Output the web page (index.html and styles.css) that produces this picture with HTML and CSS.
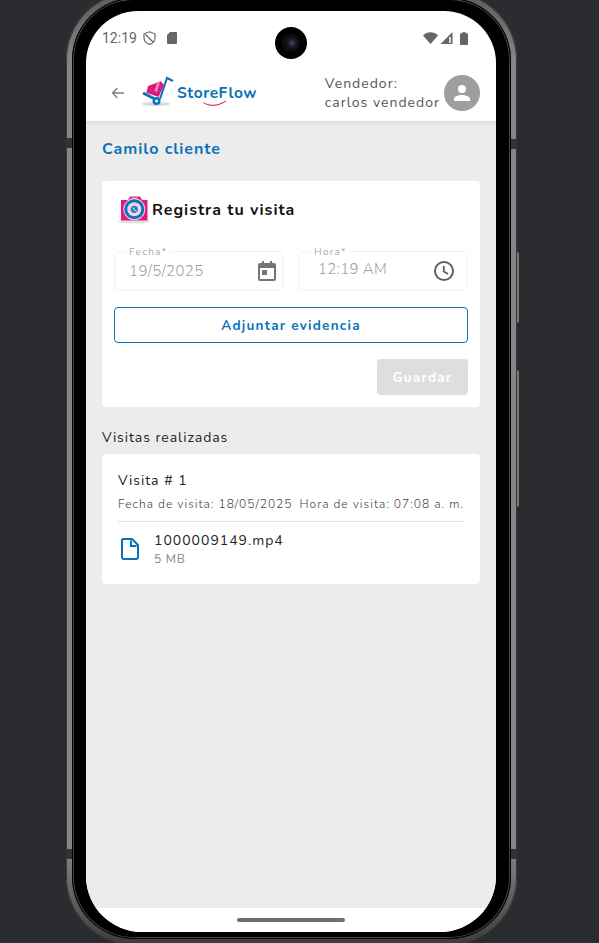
FILE: index.html
```html
<!DOCTYPE html>
<html lang="es">
<head>
  <meta charset="UTF-8">
  <meta name="viewport" content="width=device-width, initial-scale=1.0">
  <title>StoreFlow - Registra tu visita</title>
  <link rel="stylesheet" href="styles.css">
</head>
<body>
  <div class="device">
    <span class="band band-lt"></span>
    <span class="band band-rt"></span>
    <span class="band band-lb"></span>
    <span class="band band-rb"></span>
    <span class="side-btn side-btn-power"></span>
    <span class="side-btn side-btn-volume"></span>
    <div class="screen">
      <div class="camera"><span class="lens"></span></div>

      <div class="status-bar">
        <div class="status-left">
          <span class="time">12:19</span>
          <svg class="st-icon" width="13" height="14" viewBox="0 0 13 14"><path d="M6.500 0.800 L12 2.800 V7 C12 10.200 9.800 12.400 6.500 13.400 C3.200 12.400 1 10.200 1 7 V2.800 Z M2.500 3.500 L10.500 11.500" fill="none" stroke="#666" stroke-width="1.200"/></svg>
          <svg class="st-icon st-sd" width="10" height="12" viewBox="0 0 10 12"><path d="M3 0 H9 A1 1 0 0 1 10 1 V11 A1 1 0 0 1 9 12 H1 A1 1 0 0 1 0 11 V3 Z" fill="#666"/></svg>
        </div>
        <div class="status-right">
          <svg width="15" height="12" viewBox="0 0 15 12"><path d="M0 3.500 C4 -0.800 11 -0.800 15 3.500 L7.500 12 Z" fill="#666"/></svg>
          <svg width="13" height="12" viewBox="0 0 13 12"><path d="M12.500 0 V12 H0.500 Z" fill="#666"/><path d="M9 5 H11 V11 H9 Z" fill="#ddd"/></svg>
          <svg class="st-batt" width="8" height="13" viewBox="0 0 8 13"><path d="M2.500 0 H5.500 V1.200 H7 A1 1 0 0 1 8 2.200 V12 A1 1 0 0 1 7 13 H1 A1 1 0 0 1 0 12 V2.200 A1 1 0 0 1 1 1.200 H2.500 Z" fill="#666"/></svg>
        </div>
      </div>

      <header class="app-header">
        <svg class="back" width="14" height="12" viewBox="0 0 14 12"><path d="M13 6 H2 M6.500 1 L1.500 6 L6.500 11" fill="none" stroke="#808080" stroke-width="1.400"/></svg>
        <div class="logo">
          <svg class="logo-mark" width="42" height="38" viewBox="0 0 42 38">
            <ellipse cx="18" cy="32" rx="14" ry="2" fill="#d9d9d9"/>
            <path d="M10 14 L22.700 9.300 L26 12.700 L20.700 25 L8.300 20.700 Z" fill="#e0197d"/>
            <path d="M19 11 L22 10 L19 20 L16.500 19 Z" fill="#f28cbc"/>
            <path d="M5 21 L21 29" fill="none" stroke="#0a72b8" stroke-width="3"/>
            <path d="M22 27 L29 6 L35 9" fill="none" stroke="#0a72b8" stroke-width="2"/>
            <circle cx="18.500" cy="29" r="4" fill="#0a72b8"/>
            <circle cx="18.500" cy="29" r="1.500" fill="#fff"/>
          </svg>
          <div class="logo-text">
            <span class="logo-name">StoreFlow</span>
            <svg class="swoosh" width="24" height="7" viewBox="0 0 24 7"><path d="M0.500 2.500 C5 6 14 7 23 1" fill="none" stroke="#b5175f" stroke-width="1"/></svg>
          </div>
        </div>
        <div class="seller">
          <div class="seller-text">Vendedor:<br>carlos vendedor</div>
          <div class="avatar">
            <svg width="24" height="24" viewBox="0 0 24 24"><path d="M12 4 A4 4 0 1 1 12 12 A4 4 0 1 1 12 4 Z M12 14 C15 14 20 15.300 20 18 V20 H4 V18 C4 15.300 9 14 12 14 Z" fill="#fff"/></svg>
          </div>
        </div>
      </header>

      <main class="content">
        <h2 class="client">Camilo cliente</h2>

        <section class="card form-card">
          <div class="form-title">
            <svg width="36" height="34" viewBox="0 0 36 34">
              <ellipse cx="18" cy="29.500" rx="16" ry="2" fill="#e4e4e4"/>
              <path d="M5 8 H12 L14 4.500 H24 L26 8 H31.500 V28.500 H5 Z" fill="#e0197d"/>
              <rect x="15.500" y="5.500" width="6" height="1.200" fill="#f7b6d4"/>
              <circle cx="18.300" cy="17.300" r="11" fill="#f7c6dc"/>
              <circle cx="18.300" cy="17.300" r="10" fill="#0a72b8"/>
              <circle cx="18.300" cy="17.300" r="7" fill="#f2d5e6"/>
              <circle cx="18.300" cy="17.300" r="3.600" fill="#2a7fc0"/>
              <path d="M17 15.500 L18.500 18 L20.500 19" fill="none" stroke="#dbeaf6" stroke-width="1"/>
            </svg>
            <h3>Registra tu visita</h3>
          </div>

          <div class="field-row">
            <div class="field">
              <span class="field-label">Fecha*</span>
              <span class="field-value">19/5/2025</span>
              <svg class="field-icon" width="24" height="24" viewBox="0 0 24 24"><path d="M7 2 H9 V4 H15 V2 H17 V4 H19 A2 2 0 0 1 21 6 V20 A2 2 0 0 1 19 22 H5 A2 2 0 0 1 3 20 V6 A2 2 0 0 1 5 4 H7 Z M5 9 V20 H19 V9 Z M7 11 H12 V16 H7 Z" fill="#757575" fill-rule="evenodd"/></svg>
            </div>
            <div class="field field-time">
              <span class="field-label">Hora*</span>
              <span class="field-value">12:19 AM</span>
              <svg class="field-icon" width="24" height="24" viewBox="0 0 24 24"><circle cx="12" cy="12" r="9" fill="none" stroke="#5f5f5f" stroke-width="2"/><path d="M11.800 7 V12.500 L16 15" fill="none" stroke="#5f5f5f" stroke-width="1.800"/></svg>
            </div>
          </div>

          <button class="btn-outline" type="button">Adjuntar evidencia</button>
          <div class="form-actions">
            <button class="btn-save" type="button" disabled>Guardar</button>
          </div>
        </section>

        <h4 class="visits-title">Visitas realizadas</h4>

        <section class="card visit-card">
          <div class="visit-name">Visita # 1</div>
          <div class="visit-meta">
            <span>Fecha de visita: 18/05/2025</span>
            <span>Hora de visita: 07:08 a. m.</span>
          </div>
          <div class="file-row">
            <svg width="24" height="24" viewBox="0 0 24 24"><path d="M5 2 H14 L20 8 V20 A2 2 0 0 1 18 22 H6 A2 2 0 0 1 4 20 V3 A1 1 0 0 1 5 2 Z M13 3.500 V9 H18.500" fill="none" stroke="#0a72b8" stroke-width="2"/></svg>
            <div>
              <div class="file-name">1000009149.mp4</div>
              <div class="file-size">5 MB</div>
            </div>
          </div>
        </section>
      </main>

      <div class="nav-bar"><span class="home-pill"></span></div>
    </div>
  </div>
</body>
</html>
```

FILE: styles.css
```css
html, body {
  height: 100%;
}
body {
  margin: 0;
  background: #2b2c30;
  font-family: "Nunito", "Lato", "Open Sans", sans-serif;
  overflow: hidden;
}
h2, h3, h4 {
  margin: 0;
}

/* phone */
.device {
  position: relative;
  box-sizing: border-box;
  width: 451px;
  height: 953px;
  margin: -8px 0 0 66px;
  padding: 19px 21px 13px 20px;
  background: linear-gradient(180deg, #5a5a5a 0, #858585 7%, #858585 90%, #3c3c3c 100%);
  border-radius: 68px;
  box-shadow: inset 0 0 0 1px #3a3a3a;
}
.device::before {
  content: "";
  position: absolute;
  top: 6px;
  right: 6px;
  bottom: 6px;
  left: 6px;
  background: #000;
  border-radius: 62px;
  box-shadow: inset 0 0 0 1px #000, inset 0 0 0 2px #444;
}
.band {
  position: absolute;
  width: 6px;
  height: 10px;
  background: #333;
}
.band-lt { left: 0; top: 146px; }
.band-rt { right: 0; top: 147px; }
.band-lb { left: 0; top: 857px; }
.band-rb { right: 0; top: 857px; }
.side-btn {
  position: absolute;
  right: -2px;
  width: 2px;
  background: #777;
  border-radius: 0 2px 2px 0;
}
.side-btn-power { top: 260px; height: 71px; }
.side-btn-volume { top: 378px; height: 137px; }

.screen {
  position: relative;
  display: flex;
  flex-direction: column;
  height: 100%;
  background: #fff;
  border-radius: 52px 52px 56px 56px;
  overflow: hidden;
}
.camera {
  position: absolute;
  top: 16px;
  left: 189px;
  display: flex;
  align-items: center;
  justify-content: center;
  width: 32px;
  height: 32px;
  border-radius: 50%;
  background: #000;
}
.lens {
  width: 18px;
  height: 18px;
  border-radius: 50%;
  background: radial-gradient(circle at 55% 50%, #4a4a80 0, #1b1d2a 25%, #0a0a0e 55%, #1e1e1e 85%, #111 100%);
}

/* status bar */
.status-bar {
  display: flex;
  justify-content: space-between;
  align-items: center;
  height: 54px;
  padding: 0 28px 0 16px;
}
.status-left, .status-right {
  display: flex;
  align-items: center;
}
.time {
  font-family: Roboto, sans-serif;
  font-size: 14px;
  color: #666;
  margin-right: 6px;
}
.st-sd { margin-left: 11px; }
.status-right svg + svg { margin-left: 2px; }
.status-right .st-batt { margin-left: 7px; }

/* header */
.app-header {
  position: relative;
  z-index: 1;
  display: flex;
  align-items: center;
  height: 56px;
  padding: 0 16px 0 25px;
  box-sizing: border-box;
  background: #fff;
  box-shadow: 0 2px 4px rgba(0,0,0,0.08);
}
.back {
  margin-right: 13px;
}
.logo {
  display: flex;
  align-items: center;
}
.logo-mark {
  margin-top: -4px;
}
.logo-text {
  position: relative;
  margin-left: -3px;
}
.logo-name {
  font-size: 15.5px;
  font-weight: 700;
  color: #0a72b8;
  letter-spacing: 0.55px;
}
.swoosh {
  position: absolute;
  left: 26px;
  top: 18px;
}
.seller {
  display: flex;
  align-items: center;
  margin-left: auto;
}
.seller-text {
  font-size: 14px;
  line-height: 19px;
  color: #555;
  letter-spacing: 1px;
  margin-right: 4px;
}
.avatar {
  display: flex;
  align-items: center;
  justify-content: center;
  width: 36px;
  height: 36px;
  border-radius: 50%;
  background: #9e9e9e;
}

/* content */
.content {
  flex: 1;
  padding: 18px 16px 0;
  background: #ececec;
}
.client {
  font-size: 16px;
  line-height: 20px;
  font-weight: 700;
  color: #0a72b8;
  letter-spacing: 0.95px;
  margin-bottom: 22px;
}
.card {
  background: #fff;
  border-radius: 4px;
}
.form-card {
  padding: 11px 12px 12px;
}
.form-title {
  display: flex;
  align-items: center;
  padding-left: 2px;
}
.form-title h3 {
  padding-top: 2px;
  font-size: 16px;
  font-weight: 700;
  color: #111;
  letter-spacing: 1px;
}
.field-row {
  display: grid;
  grid-template-columns: 1fr 1fr;
  gap: 16px;
  margin-top: 25px;
}
.field {
  position: relative;
  display: flex;
  align-items: center;
  justify-content: space-between;
  box-sizing: border-box;
  height: 40px;
  padding: 0 3px 0 14px;
  border: 1px solid #f1f1f1;
  border-radius: 5px;
}
.field-label {
  position: absolute;
  top: -6px;
  left: 10px;
  padding: 0 4px;
  background: #fff;
  font-size: 10px;
  line-height: 12px;
  color: #aaa;
  letter-spacing: 1.3px;
}
.field-value {
  font-size: 15px;
  font-weight: 300;
  color: #a0a0a0;
  letter-spacing: 0.4px;
}
.field-time {
  padding-left: 18px;
  padding-right: 11px;
}
.field-time .field-value {
  margin-top: -4px;
  letter-spacing: 0.3px;
}
.btn-outline {
  display: block;
  width: 100%;
  height: 36px;
  margin-top: 16px;
  background: #fff;
  border: 1px solid #0a72b8;
  border-radius: 4px;
  font-family: inherit;
  font-size: 13.5px;
  font-weight: 700;
  color: #0a72b8;
  letter-spacing: 1.25px;
}
.form-actions {
  display: flex;
  justify-content: flex-end;
  margin-top: 16px;
}
.btn-save {
  width: 91px;
  height: 36px;
  background: #dedede;
  border: none;
  border-radius: 4px;
  font-family: inherit;
  font-size: 13.5px;
  font-weight: 700;
  color: #fff;
  letter-spacing: 1.25px;
}
.visits-title {
  margin: 22px 0 7px;
  font-size: 14px;
  line-height: 18px;
  font-weight: 400;
  color: #222;
  letter-spacing: 0.95px;
}
.visit-card {
  height: 130px;
  box-sizing: border-box;
  padding: 18px 16px 0;
}
.visit-name {
  font-size: 14px;
  line-height: 18px;
  color: #222;
  letter-spacing: 1px;
}
.visit-meta {
  display: flex;
  justify-content: space-between;
  margin-top: 6px;
  padding-bottom: 9px;
  border-bottom: 1px solid #e2e2e2;
  font-size: 12px;
  line-height: 16px;
  font-weight: 300;
  color: #444;
  letter-spacing: 1px;
}
.file-row {
  display: flex;
  align-items: center;
  gap: 12px;
  margin-top: 9px;
}
.file-name {
  font-size: 14px;
  line-height: 20px;
  color: #222;
  letter-spacing: 1px;
}
.file-size {
  font-size: 12px;
  line-height: 16px;
  color: #888;
  letter-spacing: 0.7px;
}

/* bottom nav */
.nav-bar {
  display: flex;
  align-items: center;
  justify-content: center;
  height: 24px;
  background: #fff;
}
.home-pill {
  width: 108px;
  height: 4px;
  border-radius: 2px;
  background: #6f6f6f;
}
```
